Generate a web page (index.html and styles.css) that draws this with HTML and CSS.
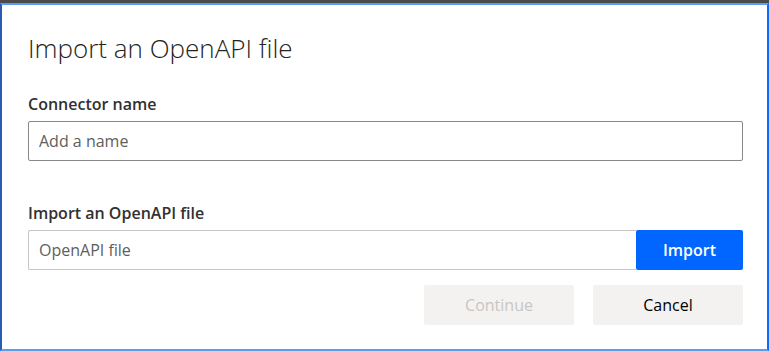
FILE: index.html
```html
<!DOCTYPE html>
<html lang="en">
<head>
  <meta charset="UTF-8">
  <title>Import an OpenAPI file</title>
  <link rel="stylesheet" href="styles.css">
</head>
<body>
  <div class="topbar"></div>
  <div class="dialog">
    <h1 class="dialog-title">Import an OpenAPI file</h1>

    <!-- connector name -->
    <div class="field">
      <label class="field-label" for="name">Connector name</label>
      <input class="text-input" id="name" type="text" placeholder="Add a name">
    </div>

    <!-- file picker -->
    <div class="field field-file">
      <label class="field-label" for="file">Import an OpenAPI file</label>
      <div class="file-row">
        <input class="text-input file-input" id="file" type="text" placeholder="OpenAPI file" readonly>
        <button class="btn btn-primary">Import</button>
      </div>
    </div>

    <div class="actions">
      <button class="btn btn-default" disabled>Continue</button>
      <button class="btn btn-default">Cancel</button>
    </div>
  </div>
</body>
</html>
```

FILE: styles.css
```css
html, body {
  margin: 0;
  height: 100%;
}
body {
  font-family: "Open Sans", "Noto Sans", sans-serif;
  background: #fff;
  color: #323130;
  display: flex;
  flex-direction: column;
}

/* dark strip above the dialog */
.topbar {
  height: 3px;
  background: #4b4b4b;
}

.dialog {
  flex: 1;
  border-top: 2px solid #5c9cf2;
  border-bottom: 2px solid #5c9cf2;
  border-left: 2px solid #2a5cb4;
  border-right: 2px solid #0a6cff;
  padding: 24px 24px 0 26px;
}

.dialog-title {
  font-size: 26px;
  font-weight: 300;
  margin: 0 0 26px 0;
  line-height: 38px;
  color: #252423;
}

.field-label {
  display: block;
  font-size: 16px;
  font-weight: 600;
  line-height: 22px;
  margin-bottom: 6px;
}

.text-input {
  box-sizing: border-box;
  width: 100%;
  height: 40px;
  border: 1px solid #8a8886;
  border-radius: 2px;
  padding: 0 10px;
  font-family: inherit;
  font-size: 16px;
  color: #323130;
  outline: none;
}
.text-input::placeholder {
  color: #605e5c;
}

.field-file {
  margin-top: 41px;
}
.file-row {
  display: flex;
}
.file-input {
  flex: 1;
  border-color: #c8c6c4;
  border-right: none;
  border-radius: 2px 0 0 2px;
}

.btn {
  font-family: inherit;
  font-size: 16px;
  font-weight: 600;
  height: 40px;
  border: none;
  border-radius: 2px;
  cursor: pointer;
}
.btn-primary {
  width: 107px;
  background: #0066ff;
  color: #fff;
}
.btn-default {
  width: 150px;
  background: #f3f2f1;
  color: #000;
  font-weight: 400;
}
.btn-default:disabled {
  color: #c8c6c4;
  cursor: default;
}

.actions {
  display: flex;
  justify-content: flex-end;
  gap: 19px;
  margin-top: 15px;
}
```
